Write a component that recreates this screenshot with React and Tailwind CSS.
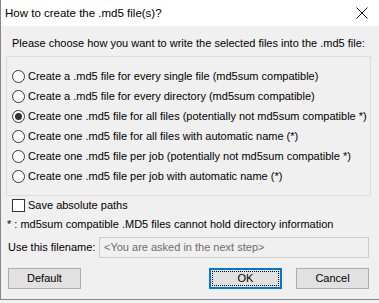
import React from "react";

const options = [
  "Create a .md5 file for every single file (md5sum compatible)",
  "Create a .md5 file for every directory (md5sum compatible)",
  "Create one .md5 file for all files (potentially not md5sum compatible *)",
  "Create one .md5 file for all files with automatic name (*)",
  "Create one .md5 file per job (potentially not md5sum compatible *)",
  "Create one .md5 file per job with automatic name (*)",
];

const Radio = ({ checked }) => (
  <span className="w-[13px] h-[13px] rounded-full border border-[#333333] bg-white flex items-center justify-center shrink-0">
    {checked && <span className="w-[7px] h-[7px] rounded-full bg-[#333333]"></span>}
  </span>
);

const Button = ({ children, focused }) => (
  <button
    className={`relative w-[73px] h-[21px] bg-[#e1e1e1] text-[11px] leading-none text-black ${
      focused ? "border-2 border-[#0078d7]" : "border border-[#adadad]"
    }`}
  >
    {focused && <span className="absolute inset-[1px] border border-dotted border-black"></span>}
    {children}
  </button>
);

export default function App() {
  return (
    <div className="w-[379px] h-[303px] bg-[#f3f3f3] font-['Liberation_Sans',Arial,sans-serif] whitespace-nowrap">
      <div className="w-[379px] h-[300px] border-l border-b border-[#858585] flex flex-col text-black">
        {/* Title bar */}
        <div className="h-[26px] bg-white flex items-center justify-between pl-[4px] pr-[10px] shrink-0">
          <span className="text-[11.5px] leading-[15px]">How to create the .md5 file(s)?</span>
          <svg width="12" height="12" viewBox="0 0 12 12" className="mr-[1px]">
            <path d="M0.5 0.5 L11.5 11.5 M11.5 0.5 L0.5 11.5" stroke="#111" strokeWidth="1" fill="none" />
          </svg>
        </div>

        {/* Body */}
        <div className="flex-1 bg-[#f0f0f0] flex flex-col text-[11px] leading-[15px]">
          <div className="pt-[10px] pl-[11px]">
            Please choose how you want to write the selected files into the .md5 file:
          </div>

          {/* Group box */}
          <div className="mt-[5px] ml-[5px] w-[365px] border border-[#dcdcdc] pt-[9px] pb-[9px] pl-[5px]">
            {options.map((label, i) => (
              <div key={i} className="h-[20px] flex items-center gap-[3px]">
                <Radio checked={i === 2} />
                <span>{label}</span>
              </div>
            ))}
          </div>

          <div className="mt-[1px] h-[16px] pl-[11px] flex items-center gap-[3px]">
            <span className="w-[13px] h-[13px] border border-[#333333] bg-white shrink-0"></span>
            <span>Save absolute paths</span>
          </div>

          <div className="mt-[3px] h-[16px] pl-[6px] flex items-center">
            * : md5sum compatible .MD5 files cannot hold directory information
          </div>

          <div className="mt-[5px] pl-[7px] pr-[10px] flex items-center justify-between">
            <span>Use this filename:</span>
            <div className="w-[270px] h-[21px] border border-[#cccccc] bg-[#f0f0f0] flex items-center pl-[4px] text-[#6d6d6d]">
              &lt;You are asked in the next step&gt;
            </div>
          </div>

          <div className="mt-[10px] pl-[7px] pr-[10px] flex items-center justify-between">
            <Button>Default</Button>
            <div className="flex gap-[14px]">
              <Button focused>OK</Button>
              <Button>Cancel</Button>
            </div>
          </div>
        </div>
      </div>
    </div>
  );
}
